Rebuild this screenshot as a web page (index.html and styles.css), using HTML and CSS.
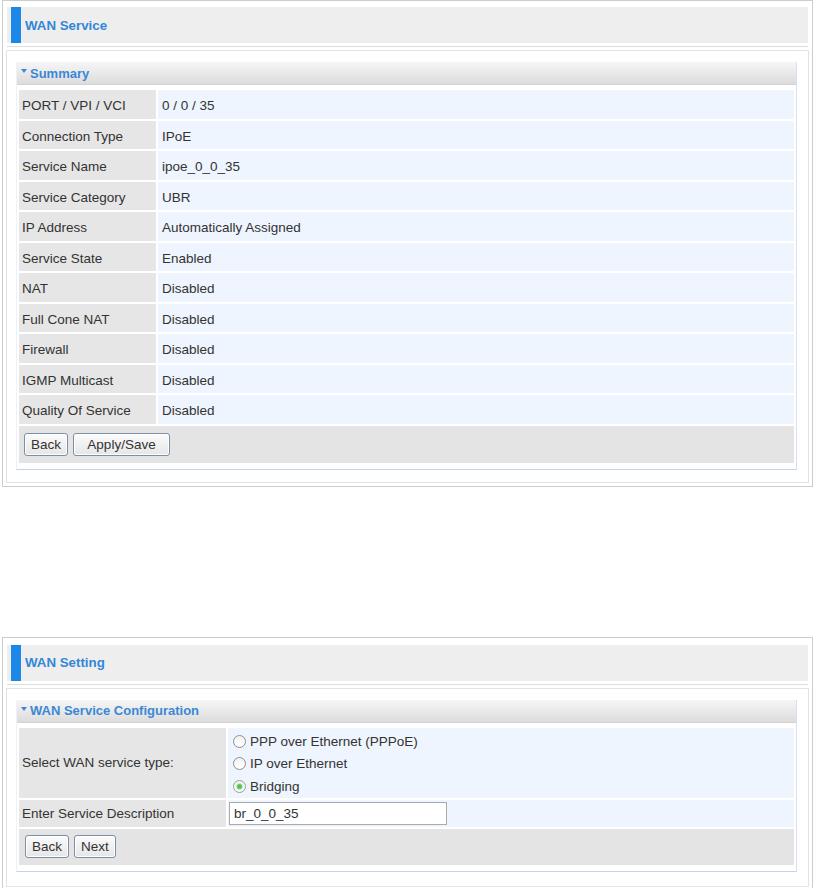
FILE: index.html
```html
<!DOCTYPE html>
<html>
<head>
<meta charset="utf-8">
<link rel="stylesheet" href="styles.css">
</head>
<body>
<div class="page">
  <section class="panel">
    <div class="panel-head"><span class="bar"></span><h1>WAN Service</h1></div>
    <div class="rule"></div>
    <div class="inner first">
      <div class="box">
        <div class="box-title"><span class="caret"></span>Summary</div>
        <table class="grid summary">
          <tr><th>PORT / VPI / VCI</th><td>0 / 0 / 35</td></tr>
          <tr><th>Connection Type</th><td>IPoE</td></tr>
          <tr><th>Service Name</th><td>ipoe_0_0_35</td></tr>
          <tr><th>Service Category</th><td>UBR</td></tr>
          <tr><th>IP Address</th><td>Automatically Assigned</td></tr>
          <tr><th>Service State</th><td>Enabled</td></tr>
          <tr><th>NAT</th><td>Disabled</td></tr>
          <tr><th>Full Cone NAT</th><td>Disabled</td></tr>
          <tr><th>Firewall</th><td>Disabled</td></tr>
          <tr><th>IGMP Multicast</th><td>Disabled</td></tr>
          <tr><th>Quality Of Service</th><td>Disabled</td></tr>
          <tr class="actions"><td colspan="2"><button class="btn">Back</button><button class="btn wide">Apply/Save</button></td></tr>
        </table>
      </div>
    </div>
  </section>

  <section class="panel second">
    <div class="panel-head"><span class="bar"></span><h1>WAN Setting</h1></div>
    <div class="rule"></div>
    <div class="inner">
      <div class="box">
        <div class="box-title"><span class="caret"></span>WAN Service Configuration</div>
        <table class="grid config">
          <tr class="tall"><th>Select WAN service type:</th>
            <td>
              <div class="opt"><span class="radio"></span>PPP over Ethernet (PPPoE)</div>
              <div class="opt"><span class="radio"></span>IP over Ethernet</div>
              <div class="opt"><span class="radio checked"></span>Bridging</div>
            </td></tr>
          <tr class="short"><th>Enter Service Description</th><td><div class="field">br_0_0_35</div></td></tr>
          <tr class="actions small"><td colspan="2"><button class="btn">Back</button><button class="btn">Next</button></td></tr>
        </table>
      </div>
    </div>
  </section>
</div>
</body>
</html>
```
FILE: styles.css
```css
html, body {
  margin: 0;
  padding: 0;
  background: #ffffff;
}
body {
  font-family: "Liberation Sans", Arial, sans-serif;
  color: #333333;
}
.page {
  padding-left: 2px;
}
.panel {
  width: 811px;
  box-sizing: border-box;
  border: 1px solid #cdcdcd;
  padding: 6px 4px 3px 4px;
}
.panel.second {
  margin-top: 150px;
  padding-top: 7px;
  padding-bottom: 2px;
}
.panel-head {
  height: 36px;
  background: #eeeeee;
  display: flex;
  align-items: center;
}
.bar {
  width: 10px;
  height: 36px;
  background: #1c87e6;
  margin-left: 4px;
}
.panel-head h1 {
  margin: 0 0 0 4px;
  font-size: 13.3px;
  font-weight: bold;
  color: #3386d8;
}
.rule {
  margin-top: 3px;
  border-top: 1px solid #dddddd;
}
.inner {
  margin: 3px -1px 0 -1px;
  border: 1px solid #e3e3e3;
  padding: 11px 11px 14px 9px;
}
.inner.first {
  padding-bottom: 12px;
}
.box {
  border-right: 1px solid #d6e0f0;
  border-bottom: 1px solid #c4d2ec;
  border-left: 1px solid #eef2f8;
}
.box-title {
  height: 23px;
  background: linear-gradient(#f6f6f6, #dcdcdc);
  border-bottom: 1px solid #d2d2d2;
  box-sizing: border-box;
  display: flex;
  align-items: center;
  padding-left: 4px;
  font-size: 13px;
  font-weight: bold;
  color: #3b88d6;
}
.caret {
  width: 0;
  height: 0;
  border-left: 3.5px solid transparent;
  border-right: 3.5px solid transparent;
  border-top: 4px solid #3b88d6;
  margin: 0 3px 4px 0;
}
.grid {
  width: 100%;
  border-collapse: separate;
  border-spacing: 2px;
  margin: 3px 0 4px 0;
  font-size: 13.5px;
}
.grid th {
  text-align: left;
  font-weight: normal;
  background: #e6e6e6;
  padding: 0 3px;
  height: 28.3px;
  color: #333333;
}
.grid td {
  background: #eef5fe;
  padding: 0 4px;
  height: 28.3px;
  color: #333333;
}
.summary th, .summary td {
  padding-top: 3px;
  height: 25.5px;
}
.summary th {
  width: 131px;
}
.config th {
  width: 201px;
}
.config td {
  padding: 0 1px;
}
.grid tr.actions td {
  background: #e4e4e4;
  height: 37px;
  padding: 0 5px;
}
.grid tr.actions.small td {
  height: 36px;
  padding-left: 6px;
}
.btn {
  font-family: "Liberation Sans", Arial, sans-serif;
  font-size: 13.5px;
  color: #333333;
  height: 23px;
  padding: 0 6px;
  margin: 0 5px 0 0;
  border: 1px solid #7c8ea8;
  border-radius: 3px;
  background: linear-gradient(#fbfbfb, #e6e6e6);
  box-shadow: inset 0 0 0 1px #ffffff;
}
.btn.wide {
  width: 97px;
}
.grid .tall th, .grid .tall td {
  height: 70px;
}
.grid .tall td {
  padding: 0 5px;
}
.opt {
  display: flex;
  align-items: center;
  height: 22.5px;
}
.opt:first-child {
  margin-top: 2px;
}
.radio {
  width: 11px;
  height: 11px;
  border: 1px solid #8e8e8e;
  border-radius: 50%;
  background: linear-gradient(#f2f2f2, #ffffff);
  margin-right: 4px;
  position: relative;
  box-sizing: content-box;
}
.radio.checked {
  border-color: #8fa58f;
}
.radio.checked::after {
  content: "";
  position: absolute;
  left: 3px;
  top: 3px;
  width: 5px;
  height: 5px;
  border-radius: 50%;
  background: #5cbf5c;
  box-shadow: 0 0 0 1px #c8ecc8;
}
.grid .short th, .grid .short td {
  height: 27px;
}
.field {
  width: 212px;
  height: 21px;
  border: 1px solid #a9a9a9;
  background: #ffffff;
  display: flex;
  align-items: center;
  padding-left: 4px;
  font-size: 13.5px;
}
```
